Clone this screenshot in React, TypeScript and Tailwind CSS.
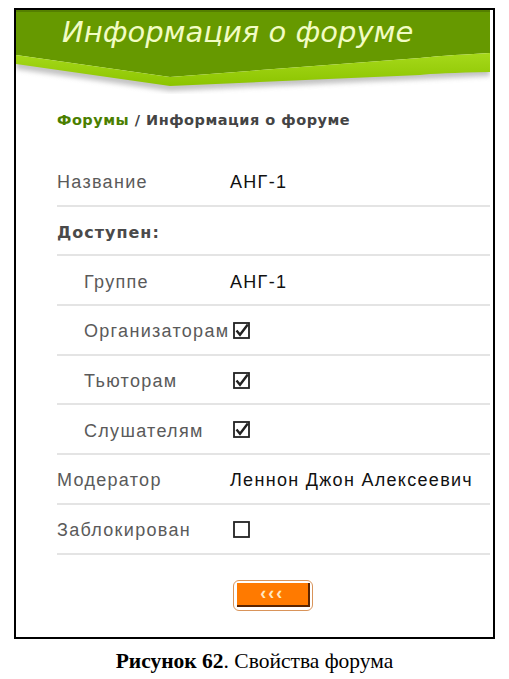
import React from 'react';

const rows = [
  { label: 'Название', value: 'АНГ-1' },
  { label: 'Доступен:', bold: true },
  { label: 'Группе', value: 'АНГ-1', indent: true },
  { label: 'Организаторам', check: true, indent: true },
  { label: 'Тьюторам', check: true, indent: true },
  { label: 'Слушателям', check: true, indent: true },
  { label: 'Модератор', value: 'Леннон Джон Алексеевич' },
  { label: 'Заблокирован', check: false },
];

function CheckBox({ checked }: { checked: boolean }) {
  return (
    <svg width="17" height="17" viewBox="0 0 17 17" className="ml-[3px] -mt-[3px]">
      <rect x="1" y="1" width="15" height="15" fill="white" stroke="#222" strokeWidth="1.8" />
      {checked && (
        <path d="M3.5 8.5 L7 12.8 L14.8 2.5" fill="none" stroke="#222" strokeWidth="2.4" />
      )}
    </svg>
  );
}

function Banner() {
  return (
    <div className="relative w-[474px] h-[84px]">
      <svg width="474" height="84" viewBox="0 0 474 84" className="absolute inset-0">
        <defs>
          <filter id="blur" x="-5%" y="-50%" width="110%" height="200%">
            <feGaussianBlur stdDeviation="2.5" />
          </filter>
          <linearGradient id="lime" x1="0" y1="0" x2="0" y2="1">
            <stop offset="0" stopColor="#a6d91a" />
            <stop offset="1" stopColor="#8cc400" />
          </linearGradient>
        </defs>
        <path
          d="M0 50 L154 72 Q300 60 474 50 L474 66 Q300 74 154 81 L0 59 Z"
          fill="#9a9a9a"
          opacity="0.6"
          filter="url(#blur)"
        />
        <path d="M0 0 H474 V43 Q420 46 404 48 L154 67 L0 45 Z" fill="#669900" />
        <rect x="0" y="0" width="474" height="2" fill="#557f00" />
        <path d="M0 45 L154 67 L404 48 Q420 46 474 43 V62 Q420 63 404 65 L154 76 L0 54 Z" fill="url(#lime)" />
      </svg>
      <div className="relative pl-[46px] pt-[2px] text-[29px] italic leading-[40px] text-[#f2fcc4] [font-family:'DejaVu_Sans',sans-serif]">
        Информация о форуме
      </div>
    </div>
  );
}

export default function App() {
  return (
    <div className="w-[509px] h-[679px] bg-white pt-[8px] pl-[14px] [font-family:'Liberation_Sans',Arial,sans-serif]">
      <div className="w-[481px] h-[631px] border-2 border-black">
        <Banner />
        <div className="ml-[41px] w-[433px]">
          <div className="mt-[17px] text-[14.5px] font-bold leading-[18px] tracking-[0.5px] text-[#444] [font-family:'DejaVu_Sans',sans-serif]">
            <span className="text-[#4b7f00]">Форумы</span> / Информация о форуме
          </div>
          <div className="mt-[28px]">
            {rows.map((row) => (
              <div
                key={row.label}
                className="flex items-center h-[49.7px] pt-[4px] border-b-2 border-[#e4e4e4]"
              >
                <div
                  className={
                    (row.indent ? 'pl-[27px] ' : '') +
                    (row.bold
                      ? 'font-bold text-[#4a4a4a] [font-family:"DejaVu_Sans",sans-serif] text-[16px] tracking-[1px]'
                      : 'text-[#5a5a5a] text-[18px] tracking-[1.3px]') +
                    ' w-[173px] shrink-0 whitespace-nowrap'
                  }
                >
                  {row.label}
                </div>
                {row.value && (
                  <div className="text-[18px] tracking-[1.3px] text-[#111] whitespace-nowrap">{row.value}</div>
                )}
                {row.check !== undefined && <CheckBox checked={row.check} />}
              </div>
            ))}
          </div>
          <div className="mt-[25px] ml-[176px] w-[80px] h-[31px] rounded-[6px] border-[1.5px] border-[#d9945a] p-[2.5px] pr-[2px]">
            <div className="h-full bg-[#ff7a00] border-r-2 border-b-2 border-[#5a2400] flex items-center justify-center text-[18px] font-bold text-[#ffe8c4] tracking-[2px] leading-none pb-[2px]">
              ‹‹‹
            </div>
          </div>
        </div>
      </div>
      <div className="-ml-[14px] mt-[9px] text-center text-[21.5px] leading-[26px] text-black [font-family:'Liberation_Serif',serif]">
        <span className="font-bold">Рисунок 62</span>. Свойства форума
      </div>
    </div>
  );
}
